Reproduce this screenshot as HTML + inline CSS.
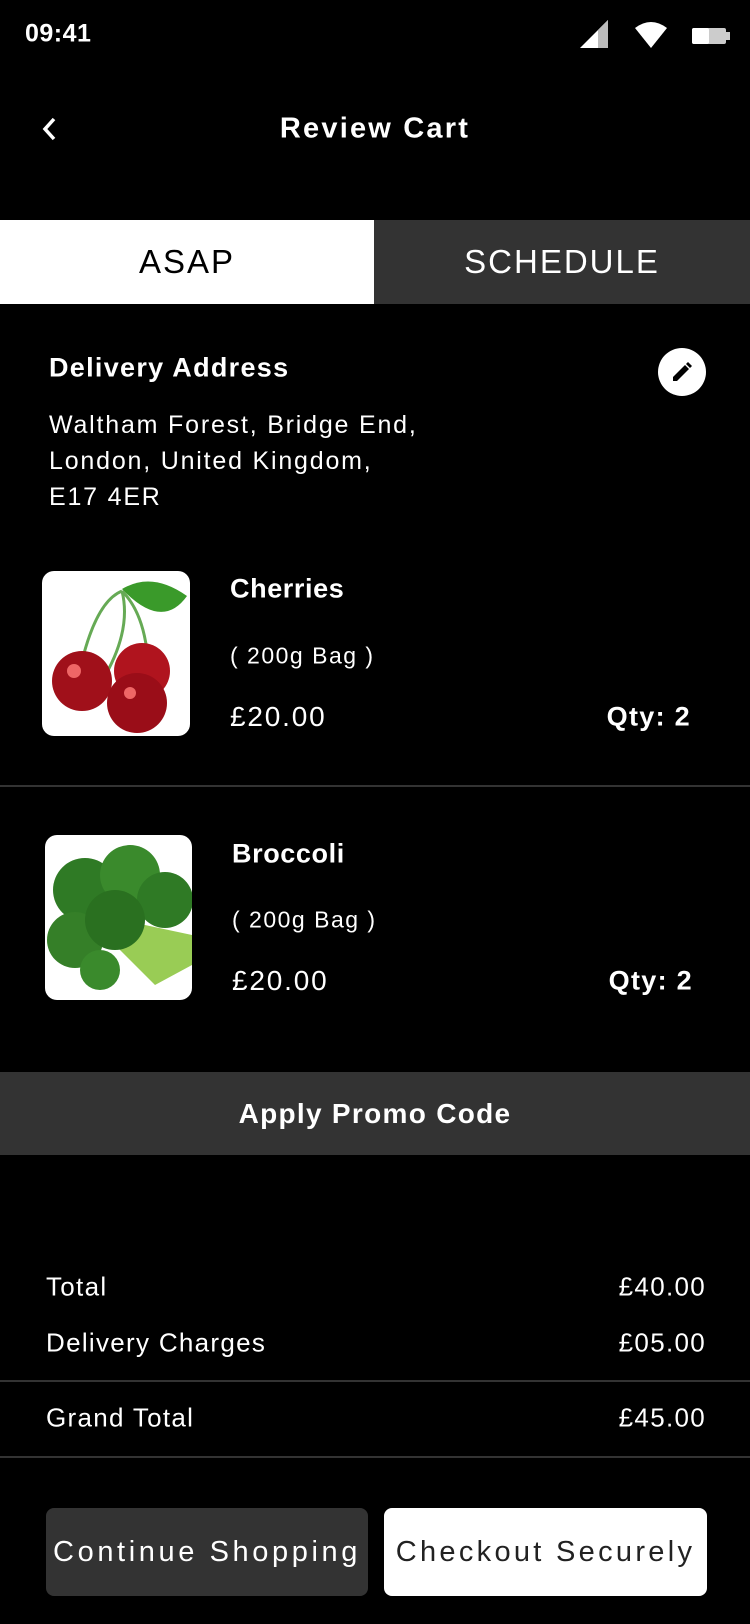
<!DOCTYPE html>
<html><head><meta charset="utf-8"><style>
*{margin:0;padding:0;box-sizing:border-box}
body{width:750px;height:1624px;background:#000;color:#fff;font-family:"Liberation Sans",sans-serif;position:relative;overflow:hidden;letter-spacing:1.3px}
.a{position:absolute;white-space:nowrap}
.c{transform:translateY(-50%)}
</style></head><body>
<div class="a c" style="left:25px;top:34px;font-size:25px;font-weight:bold;letter-spacing:0.5px">09:41</div>
<svg class="a" style="left:578px;top:18px" width="32" height="32"><polygon points="30,2 30,30 2,30" fill="#fff"/><polygon points="20,12 30,2 30,30 20,30" fill="#bbb"/></svg>
<svg class="a" style="left:633px;top:20px" width="36" height="30"><path d="M2,8 Q18,-4 34,8 L18,28 Z" fill="#fff"/></svg>
<svg class="a" style="left:692px;top:26px" width="40" height="20"><rect x="0" y="2" width="34" height="16" rx="2" fill="#ccc"/><rect x="0" y="2" width="17" height="16" rx="2" fill="#fff"/><rect x="34" y="6" width="4" height="8" fill="#ccc"/></svg>
<svg class="a" style="left:40px;top:116px" width="20" height="26"><path d="M14,3 L5,13 L14,23" stroke="#fff" stroke-width="3.5" fill="none"/></svg>
<div class="a c" style="left:0;width:750px;text-align:center;top:129px;font-size:29px;font-weight:bold;letter-spacing:2.2px">Review Cart</div>
<div class="a" style="left:0;top:220px;width:374px;height:84px;background:#fff;color:#000;font-size:33px;line-height:84px;text-align:center;letter-spacing:2px">ASAP</div>
<div class="a" style="left:374px;top:220px;width:376px;height:84px;background:#333;font-size:33px;line-height:84px;text-align:center;letter-spacing:2px">SCHEDULE</div>
<div class="a c" style="left:49px;top:368px;font-size:27px;font-weight:bold">Delivery Address</div>
<div class="a" style="left:658px;top:348px;width:48px;height:48px;border-radius:50%;background:#fff"></div>
<svg class="a" style="left:670px;top:360px" width="24" height="24"><path d="M3,21 L3,17 L15,5 L19,9 L7,21 Z M16,4 L18,2 L22,6 L20,8 Z" fill="#000"/></svg>
<div class="a" style="left:49px;top:407px;font-size:25px;line-height:36px;letter-spacing:1.8px">Waltham Forest, Bridge End,<br>London, United Kingdom,<br>E17 4ER</div>
<div class="a" style="left:42px;top:571px;width:148px;height:165px;background:#fff;border-radius:12px;overflow:hidden">
<svg width="148" height="165"><path d="M40,90 Q55,30 80,20 M80,20 Q100,40 105,80 M80,20 Q90,60 60,110" stroke="#6a5" stroke-width="3" fill="none"/><path d="M80,18 Q110,0 145,25 Q120,60 80,18Z" fill="#3a9a2a"/><circle cx="40" cy="110" r="30" fill="#a0101a"/><circle cx="100" cy="100" r="28" fill="#b0141e"/><circle cx="95" cy="132" r="30" fill="#9a0d18"/><circle cx="32" cy="100" r="7" fill="#e66"/><circle cx="88" cy="122" r="6" fill="#e66"/></svg></div>
<div class="a c" style="left:230px;top:589px;font-size:27px;font-weight:bold;letter-spacing:0.6px">Cherries</div>
<div class="a c" style="left:230px;top:656px;font-size:23px;letter-spacing:1.5px">( 200g Bag )</div>
<div class="a c" style="left:230px;top:717px;font-size:28px;letter-spacing:1.8px">£20.00</div>
<div class="a c" style="right:59px;top:717px;font-size:27px;font-weight:bold">Qty: 2</div>
<div class="a" style="left:0;top:785px;width:750px;height:2px;background:#333"></div>
<div class="a" style="left:45px;top:835px;width:147px;height:165px;background:#fff;border-radius:12px;overflow:hidden">
<svg width="147" height="165"><path d="M60,100 L110,150 L147,130 L147,100 L100,90Z" fill="#9c5"/><circle cx="40" cy="55" r="32" fill="#2f7a25"/><circle cx="85" cy="40" r="30" fill="#3a8a2c"/><circle cx="120" cy="65" r="28" fill="#2f7a25"/><circle cx="30" cy="105" r="28" fill="#357f28"/><circle cx="70" cy="85" r="30" fill="#2a7020"/><circle cx="55" cy="135" r="20" fill="#3a8a2c"/></svg></div>
<div class="a c" style="left:232px;top:854px;font-size:27px;font-weight:bold;letter-spacing:0.6px">Broccoli</div>
<div class="a c" style="left:232px;top:920px;font-size:23px;letter-spacing:1.5px">( 200g Bag )</div>
<div class="a c" style="left:232px;top:981px;font-size:28px;letter-spacing:1.8px">£20.00</div>
<div class="a c" style="right:57px;top:981px;font-size:27px;font-weight:bold">Qty: 2</div>
<div class="a" style="left:0;top:1072px;width:750px;height:83px;background:#333;font-size:28px;font-weight:bold;line-height:83px;text-align:center;letter-spacing:1.3px">Apply Promo Code</div>
<div class="a c" style="left:46px;top:1287px;font-size:26px">Total</div>
<div class="a c" style="right:44px;top:1287px;font-size:26px">£40.00</div>
<div class="a c" style="left:46px;top:1343px;font-size:26px">Delivery Charges</div>
<div class="a c" style="right:44px;top:1343px;font-size:26px">£05.00</div>
<div class="a" style="left:0;top:1380px;width:750px;height:2px;background:#333"></div>
<div class="a c" style="left:46px;top:1418px;font-size:26px">Grand Total</div>
<div class="a c" style="right:44px;top:1418px;font-size:26px">£45.00</div>
<div class="a" style="left:0;top:1456px;width:750px;height:2px;background:#333"></div>
<div class="a" style="left:46px;top:1508px;width:322px;height:88px;background:#333;border-radius:8px;font-size:29px;letter-spacing:3.6px;line-height:88px;text-align:center">Continue Shopping</div>
<div class="a" style="left:384px;top:1508px;width:323px;height:88px;background:#fff;color:#222;border-radius:8px;font-size:29px;letter-spacing:3.3px;line-height:88px;text-align:center">Checkout Securely</div>
</body></html>
